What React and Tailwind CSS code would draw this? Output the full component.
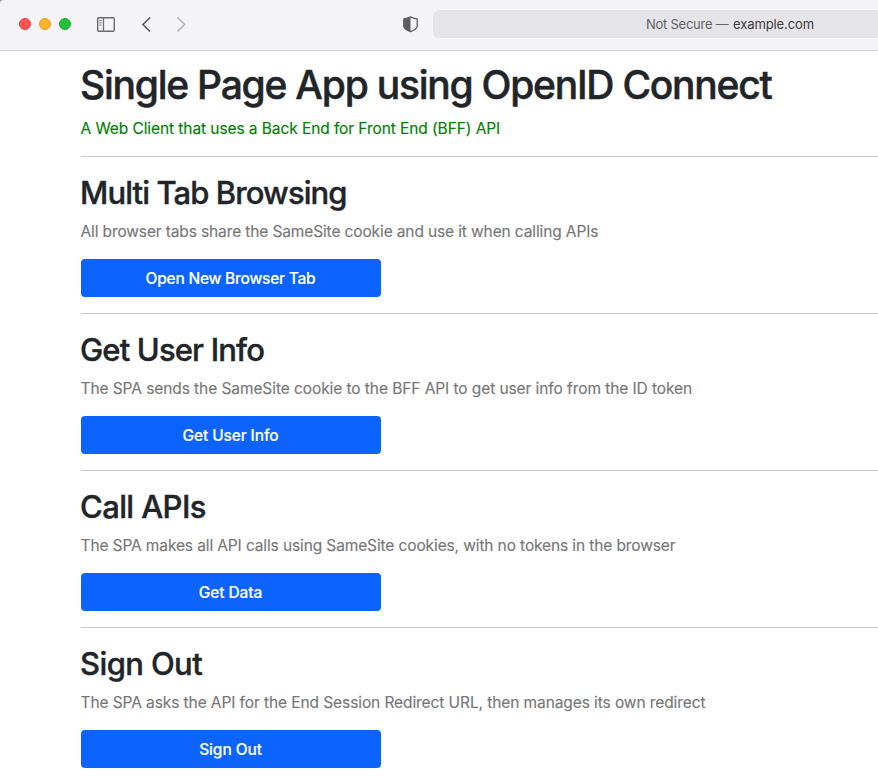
const sections = [
  {
    title: 'Multi Tab Browsing',
    text: 'All browser tabs share the SameSite cookie and use it when calling APIs',
    button: 'Open New Browser Tab',
    titleClass: 'tracking-[-0.9px]',
    textClass: 'tracking-[-0.125px]',
    buttonClass: 'tracking-[-0.22px]',
  },
  {
    title: 'Get User Info',
    text: 'The SPA sends the SameSite cookie to the BFF API to get user info from the ID token',
    button: 'Get User Info',
    titleClass: 'tracking-[-0.85px]',
    textClass: 'tracking-[-0.08px]',
    buttonClass: 'tracking-[-0.12px]',
  },
  {
    title: 'Call APIs',
    text: 'The SPA makes all API calls using SameSite cookies, with no tokens in the browser',
    button: 'Get Data',
    titleClass: 'tracking-[-0.6px]',
    textClass: 'tracking-[-0.12px]',
    buttonClass: 'tracking-[-0.1px]',
  },
  {
    title: 'Sign Out',
    text: 'The SPA asks the API for the End Session Redirect URL, then manages its own redirect',
    button: 'Sign Out',
    titleClass: 'tracking-[-0.6px]',
    textClass: 'tracking-[-0.09px]',
    buttonClass: 'tracking-[-0.1px]',
  },
];

function Toolbar() {
  return (
    <header className="flex h-[51px] shrink-0 items-start rounded-tl-[4px] border-b border-[#d0d0d3] bg-[#f4f3f8]">
      <div className="flex h-12 w-[433px] shrink-0 items-center">
        <div className="ml-[19px] flex gap-2">
          <span className="size-3 rounded-full border border-[#e2443f] bg-[#ff534d]" />
          <span className="size-3 rounded-full border border-[#e09b22] bg-[#feb429]" />
          <span className="size-3 rounded-full border border-[#1dab2c] bg-[#24c138]" />
        </div>
        <svg className="ml-[26px] shrink-0" width="18" height="15" viewBox="0 0 18 15" fill="none" stroke="#6b6a6f">
          <rect x="0.7" y="0.7" width="16.6" height="13.6" rx="1.2" strokeWidth="1.4" />
          <path d="M6.5 1v13" strokeWidth="1.2" />
          <path d="M2.3 3.5h2.4M2.3 5.8h2.4M2.3 8.1h2.4" strokeWidth="0.9" />
        </svg>
        <svg className="ml-[27px] shrink-0" width="9" height="15" viewBox="0 0 9 15" fill="none" stroke="#59585d" strokeWidth="1.7" strokeLinecap="round" strokeLinejoin="round">
          <path d="M7.6 1L.9 7.5l6.7 6.5" />
        </svg>
        <svg className="ml-[26px] shrink-0" width="9" height="15" viewBox="0 0 9 15" fill="none" stroke="#b3b2b7" strokeWidth="1.7" strokeLinecap="round" strokeLinejoin="round">
          <path d="M1 1l6.7 6.5L1 14" />
        </svg>
        <svg className="ml-[217px] shrink-0" width="15" height="17" viewBox="0 0 15 17">
          <path d="M7.5 .8L.9 2.9V11.2C1.6 13 4.6 14.8 7.5 15.7Z" fill="#5d5c61" />
          <path d="M7.5 .8C5.6 1.8 3 2.5 .8 2.9V10.6C1.4 12.9 4.4 14.6 7.5 15.7C10.6 14.6 13.6 12.9 14.2 10.6V2.9C12 2.5 9.4 1.8 7.5.8Z" fill="none" stroke="#5d5c61" strokeWidth="1.3" strokeLinejoin="round" />
        </svg>
      </div>
      <div className="mt-[10px] flex h-7 grow items-center rounded-l-md bg-[#e5e4e9] pt-px pl-[213px] text-[13px] whitespace-nowrap text-[#626166]">
        <span className="w-[87px] tracking-[-0.25px]">Not Secure —</span>
        <span className="tracking-[-0.1px] text-[#3a3a3d]">example.com</span>
      </div>
    </header>
  );
}

export default function App() {
  return (
    <div className="flex h-[780px] w-[878px] flex-col overflow-hidden bg-[linear-gradient(135deg,#9a9a9e_6px,#ffffff_6px)] font-['Inter',sans-serif] whitespace-nowrap text-[#212529]">
      <Toolbar />
      <main className="pt-[10px] pl-[81px]">
        <h1 className="-ml-px h-12 text-[39px] leading-[48px] font-medium [-webkit-text-stroke:0.5px_#212529]">
          <span className="tracking-[-1.24px]">Single Page App using OpenID Connect</span>
        </h1>
        <p className="-ml-[0.5px] mt-2 h-6 text-[15.5px] leading-6 text-[#008000] [-webkit-text-stroke:0.15px_#008000]">
          <span className="tracking-[-0.08px]">A Web Client that uses a Back End for Front End (BFF) API</span>
        </p>
        <div className="mt-[15px]">
          {sections.map((s) => (
            <section key={s.title} className="h-[157px] border-t border-[#c8c9ca] pt-[17px]">
              <h2 className="-ml-px h-[38px] text-[31px] leading-[38px] font-medium [-webkit-text-stroke:0.4px_#212529]">
                <span className={s.titleClass}>{s.title}</span>
              </h2>
              <p className="-ml-[0.5px] mt-2 h-6 text-[15.5px] leading-6 text-[#777777] [-webkit-text-stroke:0.15px_#777777]">
                <span className={s.textClass}>{s.text}</span>
              </p>
              <button className="mt-[15px] block h-[38px] w-[300px] rounded bg-[#0d63fd] pt-0.5 pr-px text-[15.5px] leading-6 font-medium text-white [-webkit-text-stroke:0.15px_#ffffff]">
                <span className={s.buttonClass}>{s.button}</span>
              </button>
            </section>
          ))}
        </div>
      </main>
    </div>
  );
}
